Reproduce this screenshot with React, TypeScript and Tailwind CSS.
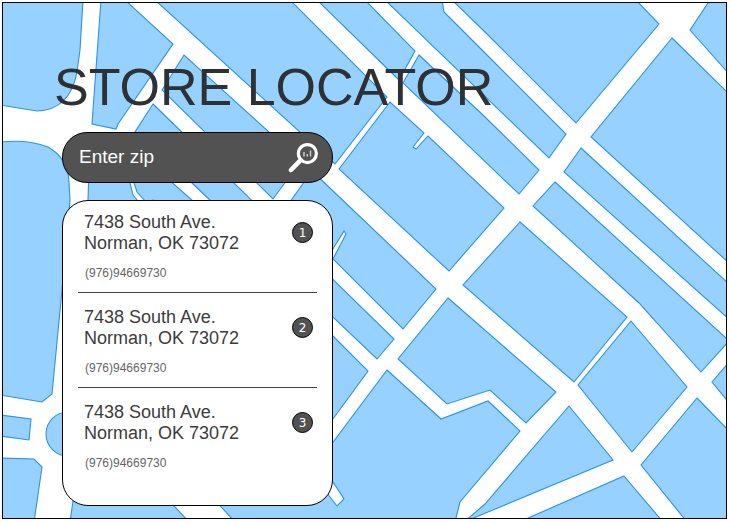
type Store = { id: number; street: string; city: string; phone: string };

const stores: Store[] = [
  { id: 1, street: "7438 South Ave.", city: "Norman, OK 73072", phone: "(976)94669730" },
  { id: 2, street: "7438 South Ave.", city: "Norman, OK 73072", phone: "(976)94669730" },
  { id: 3, street: "7438 South Ave.", city: "Norman, OK 73072", phone: "(976)94669730" },
];

// City blocks; the white gaps between them are the streets.
const blocks: string[] = [
  "M0 0H83L80 50L77 72Q70 110 37 111L0 105Z",
  "M101 0H125L173 44L118 124L116 129L92 124Z",
  "M155 0H290L387 97L335 164Z",
  "M339 169L390 102L424 133L413 147L416 149L428 136L504 208L449 271Z",
  "M317 0H365L415 51L399 80Z",
  "M419 55L403 83L519 194L539 170L485 117Z",
  "M385 0H442L444 12L485 53L566 134L549 158Z",
  "M452 0L485 32L576 123L659 24L636 0Z",
  "M710 0H730V75L690 30Z",
  "M672 38L730 95V264L591 137Z",
  "M581 148L730 285V320L564 172Z",
  "M555 182L726 338L730 340L701 372L639 303L533 206Z",
  "M520 222L627 317L574 382L463 285Z",
  "M631 321L687 387L632 452L578 385Z",
  "M730 361L712 382L730 404Z",
  "M697 398L730 432V522H687L641 465Z",
  "M624 476L663 522H519Z",
  "M569 406L613 460L464 522L485 504Z",
  "M448 298L556 392L526 423L490 390L447 404L398 359Z",
  "M387 370L441 419L488 401L520 431L460 502L455 522H235L200 484L317 480L337 506L344 499L322 465V457Z",
  "M76 480L70 522H189L150 480Z",
  "M0 458L34 459L42 467L34 522H0Z",
  "M0 415L31 419L29 440L0 436Z",
  "M68 412A22 22 0 1 0 68 456A22 22 0 1 0 68 412Z",
  "M0 142Q28 139 48 147Q68 158 69 182L70 200L62 290L52 394L42 402L0 395Z",
  "M89 170H128L130 183L133 195L138 201L160 230H87Z",
  "M133 170L134 183L137 192L146 202H151A2 2 0 1 1 155 202H194L158 170Z",
  "M153 104L394 339L377 359L192 183L135 132Z",
  "M162 90L184 55L301 161L273 199Z",
  "M312 171L436 289L403 329L333 259L346 234L344 231L331 252L287 206Z",
  "M325 328L368 371L333 419L310 440V328Z",
];

function StreetMap() {
  return (
    <svg
      className="absolute inset-0 h-full w-full"
      viewBox="3 3 723 515"
      preserveAspectRatio="xMidYMid slice"
      aria-hidden="true"
    >
      <g fill="#97d1ff" stroke="#2b92e8" strokeWidth="1.1">
        {blocks.map((d) => (
          <path key={d} d={d} />
        ))}
      </g>
    </svg>
  );
}

function SearchIcon() {
  return (
    <svg width="30" height="30" viewBox="0 0 30 30" fill="none" aria-hidden="true">
      <circle cx="19.4" cy="10.6" r="9" stroke="#fff" strokeWidth="3.2" />
      <path d="M12.6 17.2L3 27" stroke="#fff" strokeWidth="4.6" strokeLinecap="round" />
      <path d="M16 9V13.5M19.3 11V13.5M22.5 7.5V13.5" stroke="#d4d4d4" strokeWidth="1.4" />
    </svg>
  );
}

export default function App() {
  return (
    <main className="bg-white pt-0.5 pr-[3px] pb-[3px] pl-0.5 font-['Liberation_Sans',Arial,sans-serif]">
      <div className="relative overflow-hidden border border-black bg-white">
        <StreetMap />
        <div className="relative px-[51px] pt-[54px] pb-3">
          <h1 className="text-[52px] leading-[60px] whitespace-nowrap text-[#2e3133]">STORE LOCATOR</h1>

          <div className="ml-2 w-[271px]">
            <form
              className="mt-[15px] flex h-[51px] items-center rounded-[25px] border border-black bg-[#525252] pr-3.5 pl-4"
              onSubmit={(event) => event.preventDefault()}
            >
              <input
                type="text"
                aria-label="Enter zip"
                placeholder="Enter zip"
                className="min-w-0 flex-1 bg-transparent text-[19px] text-white outline-none placeholder:text-white"
              />
              <button type="submit" aria-label="Search">
                <SearchIcon />
              </button>
            </form>

            <ol className="mt-[17px] rounded-[26px] border border-black bg-white px-[15px] pb-[23px]">
              {stores.map((store) => (
                <li
                  key={store.id}
                  className="flex items-start justify-between border-b border-[#444] pt-3.5 pr-1 pb-[11px] pl-1.5 first:pt-[11px] last:border-b-0"
                >
                  <div>
                    <address className="text-lg leading-[21px] text-[#3c3c3c] not-italic">
                      {store.street}
                      <br />
                      {store.city}
                    </address>
                    <p className="mt-[11px] pl-px text-xs leading-4 text-[#666]">{store.phone}</p>
                  </div>
                  <span className="mt-2.5 flex size-[21px] items-center justify-center rounded-full border border-black bg-[#525252] font-['DejaVu_Sans',sans-serif] text-xs text-white">
                    {store.id}
                  </span>
                </li>
              ))}
            </ol>
          </div>
        </div>
      </div>
    </main>
  );
}
